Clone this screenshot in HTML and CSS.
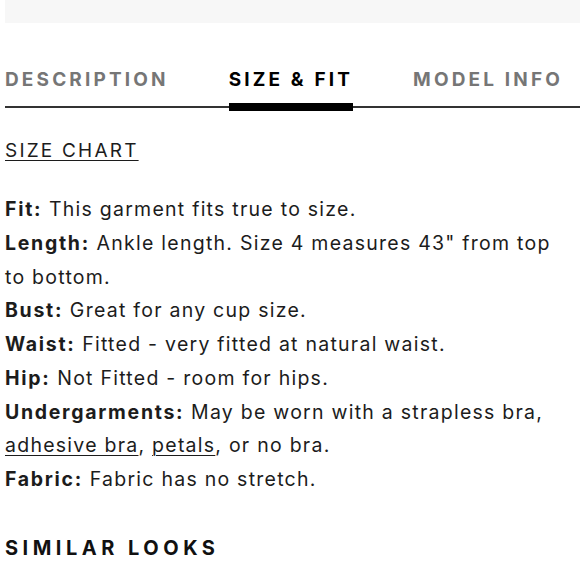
FILE: index.html
```html
<!DOCTYPE html>
<html lang="en">
<head>
<meta charset="utf-8">
<title>Size &amp; Fit</title>
<link rel="stylesheet" href="styles.css">
</head>
<body>
<div class="page">
  <div class="topbar"></div>
  <nav class="tabs">
    <span class="tab">DESCRIPTION</span>
    <span class="tab active">SIZE &amp; FIT</span>
    <span class="tab">MODEL INFO</span>
  </nav>
  <a class="size-chart" href="#">SIZE CHART</a>
  <div class="details">
    <p><b>Fit:</b> This garment fits true to size.</p>
    <p><b>Length:</b> Ankle length. Size 4 measures 43" from top to bottom.</p>
    <p><b>Bust:</b> Great for any cup size.</p>
    <p><b>Waist:</b> Fitted - very fitted at natural waist.</p>
    <p><b>Hip:</b> Not Fitted - room for hips.</p>
    <p><b>Undergarments:</b> May be worn with a strapless bra, <a href="#">adhesive bra</a>, <a href="#">petals</a>, or no bra.</p>
    <p><b>Fabric:</b> Fabric has no stretch.</p>
  </div>
  <h2 class="similar">SIMILAR LOOKS</h2>
</div>
</body>
</html>
```

FILE: styles.css
```css
html, body {
  margin: 0;
  padding: 0;
  background: #fff;
}
.page {
  padding-left: 5px;
  font-family: Inter, "Noto Sans", sans-serif;
  color: #1c1c1c;
}
.topbar {
  height: 23px;
  background: #f7f7f7;
}
.tabs {
  display: flex;
  gap: 60px;
  margin-top: 45px;
  border-bottom: 2px solid #333;
}
.tab {
  position: relative;
  font-size: 19px;
  line-height: 24px;
  font-weight: 700;
  letter-spacing: 3.15px;
  color: #767676;
  padding-bottom: 14px;
}
.tab.active {
  color: #000;
}
.tab.active::after {
  content: "";
  position: absolute;
  left: 0;
  right: 0;
  bottom: -5px;
  height: 8px;
  background: #000;
}
.size-chart {
  display: block;
  width: max-content;
  margin-top: 26px;
  font-size: 19px;
  line-height: 34px;
  letter-spacing: 2.2px;
  color: #1c1c1c;
  text-decoration: underline;
  text-decoration-thickness: 1px;
  text-underline-offset: 3px;
}
.details {
  margin-top: 25px;
  padding-right: 15px;
  font-size: 19.5px;
  line-height: 33.75px;
  letter-spacing: 1.25px;
}
.details p {
  margin: 0;
}
.details b {
  font-weight: 700;
  letter-spacing: 1.7px;
}
.details a {
  color: inherit;
  text-decoration: underline;
  text-decoration-thickness: 1px;
  text-underline-offset: 3px;
}
.similar {
  margin: 39px 0 0;
  font-size: 20px;
  line-height: 24px;
  font-weight: 700;
  letter-spacing: 4.5px;
  color: #111;
}
```
